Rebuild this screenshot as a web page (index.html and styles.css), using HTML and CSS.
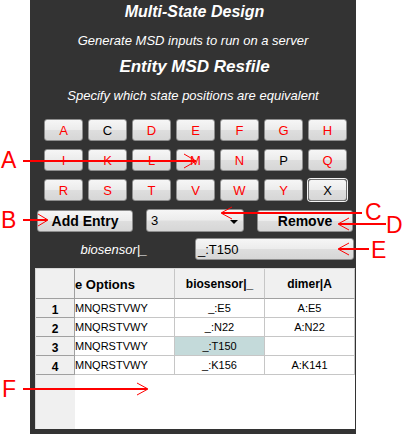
FILE: index.html
```html
<!DOCTYPE html>
<html>
<head>
<meta charset="utf-8">
<link rel="stylesheet" href="styles.css">
</head>
<body>
<div class="page">
  <div class="panel">
    <div class="title">Multi-State Design</div>
    <div class="sub">Generate MSD inputs to run on a server</div>
    <div class="title2">Entity MSD Resfile</div>
    <div class="sub2">Specify which state positions are equivalent</div>
    <div class="grid">
      <div class="key red">A</div><div class="key">C</div><div class="key red">D</div><div class="key red">E</div><div class="key red">F</div><div class="key red">G</div><div class="key red">H</div>
      <div class="key red">I</div><div class="key red">K</div><div class="key red">L</div><div class="key red">M</div><div class="key red">N</div><div class="key">P</div><div class="key red">Q</div>
      <div class="key red">R</div><div class="key red">S</div><div class="key red">T</div><div class="key red">V</div><div class="key red">W</div><div class="key red">Y</div><div class="key focus">X</div>
    </div>
    <div class="controls">
      <div class="btn">Add Entry</div>
      <div class="select"><span>3</span><span class="caret"></span></div>
      <div class="btn">Remove</div>
    </div>
    <div class="fieldrow">
      <div class="label">biosensor|_</div>
      <div class="field">_:T150</div>
    </div>
    <div class="table">
      <div class="cell corner"></div>
      <div class="cell head clip"><span class="shift">e Options</span></div>
      <div class="cell head">biosensor|_</div>
      <div class="cell head">dimer|A</div>

      <div class="cell rh">1</div>
      <div class="cell dl">MNQRSTVWY</div>
      <div class="cell dc">_:E5</div>
      <div class="cell dc">A:E5</div>

      <div class="cell rh">2</div>
      <div class="cell dl">MNQRSTVWY</div>
      <div class="cell dc">_:N22</div>
      <div class="cell dc">A:N22</div>

      <div class="cell rh">3</div>
      <div class="cell dl">MNQRSTVWY</div>
      <div class="cell dc sel">_:T150</div>
      <div class="cell dc"></div>

      <div class="cell rh">4</div>
      <div class="cell dl">MNQRSTVWY</div>
      <div class="cell dc">_:K156</div>
      <div class="cell dc">A:K141</div>

      <div class="fill-rh"></div>
      <div class="fill-data"></div>
    </div>
  </div>
  <svg class="annot" width="411" height="434" viewBox="0 0 411 434">
    <g stroke="#ff0000" fill="none">
      <line x1="23" y1="161" x2="196" y2="161" stroke-width="2"/>
      <polyline points="184,154 196,161 184,168" stroke-width="1"/>
      <line x1="23" y1="220" x2="47" y2="220" stroke-width="2"/>
      <polyline points="38,214 48,220 38,226" stroke-width="1"/>
      <line x1="222" y1="213" x2="362" y2="213" stroke-width="2"/>
      <polyline points="232,207 221,213 232,219" stroke-width="1"/>
      <line x1="339" y1="224" x2="386" y2="224" stroke-width="2"/>
      <polyline points="349,218 338,224 349,230" stroke-width="1"/>
      <line x1="339" y1="249" x2="369" y2="249" stroke-width="2"/>
      <polyline points="349,243 338,249 349,255" stroke-width="1"/>
      <line x1="23" y1="389" x2="147" y2="389" stroke-width="2"/>
      <polyline points="137,383 148,389 137,395" stroke-width="1"/>
    </g>
    <g fill="#ff0000" class="annot-text">
      <text x="1" y="168">A</text>
      <text x="1" y="228">B</text>
      <text x="365" y="220">C</text>
      <text x="386" y="233">D</text>
      <text x="371" y="258">E</text>
      <text x="2" y="397">F</text>
    </g>
  </svg>
</div>
</body>
</html>
```
FILE: styles.css
```css
html, body {
  margin: 0;
  padding: 0;
  background: #ffffff;
}

.page {
  position: relative;
  width: 411px;
  height: 434px;
  overflow: hidden;
  font-family: "Liberation Sans", Arial, sans-serif;
}

.panel {
  width: 326px;
  height: 434px;
  margin-left: 30px;
  background: #333333;
  display: flex;
  flex-direction: column;
  box-sizing: border-box;
}

.title, .title2 {
  color: #ffffff;
  font-weight: bold;
  font-style: italic;
  text-align: center;
  height: 20px;
  line-height: 20px;
  padding-left: 3px;
}

.title {
  font-size: 16px;
  margin-top: 2px;
}

.title2 {
  font-size: 17px;
  margin-top: 8px;
}

.sub, .sub2 {
  color: #ffffff;
  font-style: italic;
  font-size: 13px;
  height: 16px;
  line-height: 16px;
  text-align: center;
  margin-top: 11px;
}

.grid {
  margin-top: 15px;
  margin-left: 14px;
  display: grid;
  grid-template-columns: repeat(7, 39px);
  grid-auto-rows: 22px;
  column-gap: 5px;
  row-gap: 8px;
}

.key, .btn, .select, .field {
  box-sizing: border-box;
  border: 1px solid #8e8e8e;
  border-radius: 3px;
  background: linear-gradient(#f6f6f6 0%, #ececec 48%, #dedede 52%, #d6d6d6 100%);
}

.key {
  display: flex;
  align-items: center;
  justify-content: center;
  font-size: 13px;
  color: #000000;
}

.key.red {
  color: #ff0000;
}

.key.focus {
  box-shadow: 0 0 0 1px #f4f4f4;
  border-color: #6f6f6f;
}

.controls {
  margin-top: 8px;
  margin-left: 7px;
  display: flex;
  align-items: flex-start;
  column-gap: 13px;
}

.btn {
  width: 96px;
  height: 22px;
  margin-top: 1px;
  display: flex;
  align-items: center;
  justify-content: center;
  font-size: 14px;
  font-weight: bold;
  color: #000000;
}

.select {
  width: 98px;
  height: 23px;
  display: flex;
  align-items: center;
  justify-content: space-between;
  padding: 0 5px 0 4px;
  font-size: 13px;
  color: #000000;
}

.caret {
  width: 0;
  height: 0;
  border-left: 4px solid transparent;
  border-right: 4px solid transparent;
  border-top: 4px solid #000000;
  margin-top: 2px;
}

.fieldrow {
  margin-top: 6px;
  margin-left: 7px;
  display: flex;
  align-items: center;
}

.label {
  width: 158px;
  padding-right: 4px;
  box-sizing: border-box;
  text-align: center;
  color: #ffffff;
  font-style: italic;
  font-size: 13px;
}

.field {
  width: 159px;
  height: 22px;
  display: flex;
  align-items: center;
  padding-left: 2px;
  font-size: 13px;
  color: #000000;
}

.table {
  margin-top: 8px;
  margin-left: 5px;
  width: 320px;
  height: 161px;
  box-sizing: border-box;
  border-left: 1px solid #d8d8d8;
  border-top: 1px solid #d8d8d8;
  background: #ffffff;
  display: grid;
  grid-template-columns: 39px 100px 90px 90px;
  grid-template-rows: 30px 19px 19px 19px 19px 1fr;
  font-size: 11px;
  color: #000000;
}

.cell {
  box-sizing: border-box;
  border-right: 1px solid #c6c6c6;
  border-bottom: 1px solid #c6c6c6;
  display: flex;
  align-items: center;
  overflow: hidden;
  white-space: nowrap;
}

.corner, .head {
  background: #f0f0f0;
  border-bottom-color: #a0a0a0;
}

.corner {
  border-right-color: #a0a0a0;
}

.head {
  justify-content: center;
  font-weight: bold;
  font-size: 12px;
  padding-top: 1px;
}

.head.clip {
  justify-content: flex-start;
  font-size: 13px;
}

.shift {
  margin-left: 0;
}

.rh {
  background: #f0f0f0;
  border-right-color: #a0a0a0;
  border-bottom-color: #a0a0a0;
  justify-content: center;
  font-weight: bold;
  font-size: 12px;
  padding-top: 3px;
}

.dl {
  justify-content: flex-start;
  padding-left: 0;
}

.dc {
  justify-content: center;
}

.sel {
  background: #c4dada;
}

.fill-rh {
  background: #f0f0f0;
}

.fill-data {
  grid-column: span 3;
  background: #ffffff;
}

.annot {
  position: absolute;
  left: 0;
  top: 0;
  pointer-events: none;
}

.annot-text {
  font-family: "Liberation Sans", Arial, sans-serif;
  font-size: 23px;
}
```
